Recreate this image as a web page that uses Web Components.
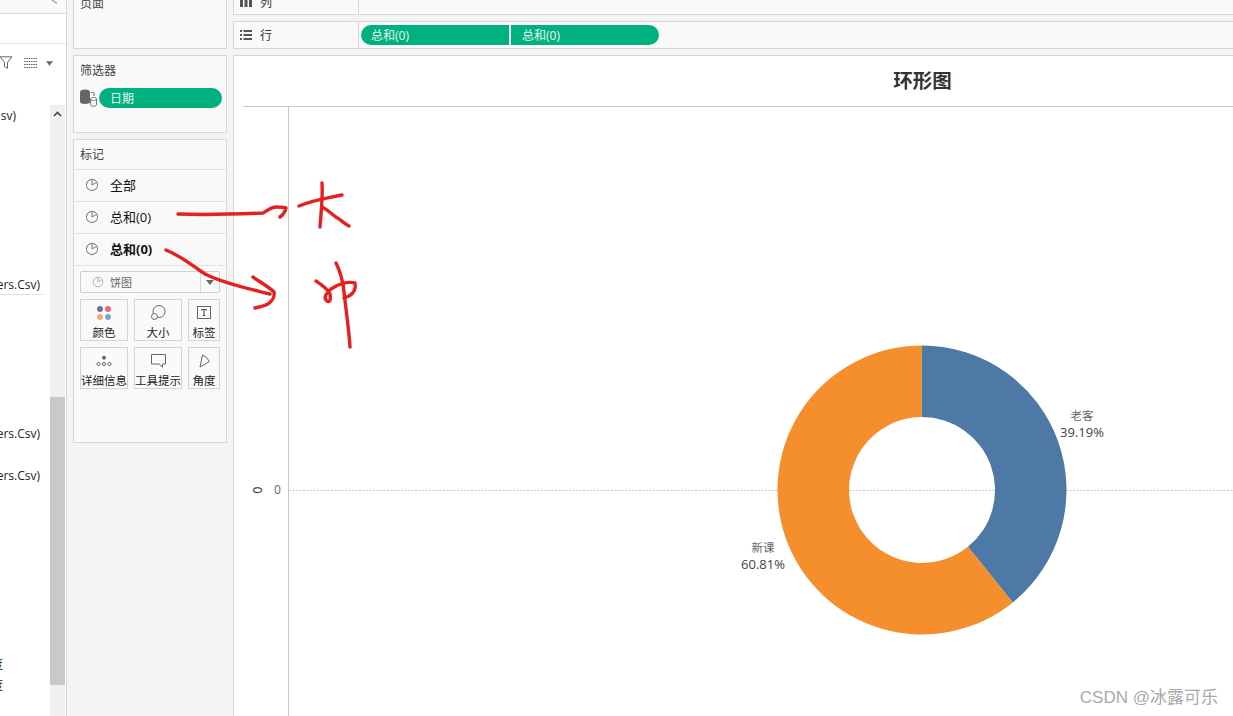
<!DOCTYPE html>
<html lang="zh">
<head>
<meta charset="utf-8">
<title>环形图</title>
<style>
  html, body { margin: 0; height: 100%; overflow: hidden; background: #f4f4f4; }
  body { font: 12px "Open Sans", "Noto Sans CJK SC", sans-serif; color: #222; }
</style>
</head>
<body>
<tab-app></tab-app>
<script>
const clockIcon = (size = 14, color = '#888') => `<svg width="${size}" height="${size}" viewBox="0 0 14 14" fill="none" stroke="${color}" stroke-width="1.1"><circle cx="7" cy="7" r="5.6"/><path d="M7 7V1.4M7 7l3.6-2.2"/></svg>`;

class DataPanel extends HTMLElement {
  constructor() {
    super();
    this.attachShadow({ mode: 'open' });
    // [text, empty space above in px, inset from the right, has underline]
    const rows = [
      ['sv)', 0, 34, false], ['ers.Csv)', 147, 10, true], ['ers.Csv)', 130, 10, false],
      ['ers.Csv)', 21, 10, false], ['度', 168, 47, false], ['度', 0, 47, false]
    ];
    this.shadowRoot.innerHTML = `
      <style>
        :host { display: flex; flex-direction: column; width: 66px; background: #fff; border-right: 1px solid #d6d6d6; height: 100%; overflow: hidden; }
        .top { height: 26px; box-sizing: border-box; border-bottom: 1px solid #dcdcdc; display: flex; justify-content: flex-end; align-items: flex-end; padding: 0 8px 9px 0; flex: none; background: #fafafa; }
        .tabs { height: 30px; box-sizing: border-box; border-bottom: 1px solid #e4e4e4; flex: none; }
        .tools { height: 61px; flex: none; display: flex; justify-content: flex-end; align-items: flex-start; padding: 12px 13px 0 0; box-sizing: border-box; }
        .sep { width: 1px; height: 16px; background: #d0d0d0; margin: 0 6px; }
        .list { flex: 1; display: flex; min-height: 0; }
        .rows { width: 50px; overflow: hidden; flex: none; }
        .row { height: 21px; line-height: 21px; white-space: nowrap; display: flex; justify-content: flex-end; box-sizing: border-box; font-size: 12px; }
        .row.line { box-shadow: 0 1px 0 #e2e2e2; margin-right: 7px; height: 20px; position: relative; top: 1px; }
        .bar { width: 15px; background: #f0f0f0; flex: none; display: flex; flex-direction: column; align-items: center; }
        .up { height: 292px; flex: none; padding-top: 6px; box-sizing: border-box; }
        .up svg { display: block; }
        .thumb { width: 15px; height: 288px; background: #c9c9c9; flex: none; }
      </style>
      <div class="top"><svg width="7" height="8" viewBox="0 0 7 8" fill="none" stroke="#777" style="display:block"><path d="M6 0.5L1 4 6 7.5"/></svg></div>
      <div class="tabs"></div>
      <div class="tools">
        <svg width="12" height="13" viewBox="0 0 12 13" fill="none" stroke="#666" style="flex:none"><path d="M0 .8h12L7.500 6.300v6L4.500 10.600V6.300z"/></svg>
        <span class="sep"></span>
        <svg width="13" height="10" viewBox="0 0 13 10" fill="none" stroke="#666" stroke-dasharray="1.600 .7" style="margin-top:2px;flex:none"><path d="M0 .5h13M0 3.500h13M0 6.500h13M0 9.500h13"/></svg>
        <svg width="7" height="5" viewBox="0 0 8 5" fill="#666" style="margin:5px 0 0 9px;flex:none"><path d="M0 0h8L4 5z"/></svg>
      </div>
      <div class="list">
        <div class="rows">
          ${rows.map(([t, gap, pad, line]) => `<div class="row ${line ? 'line' : ''}" style="margin-top:${gap}px;padding-right:${line ? pad - 7 : pad}px">${t}</div>`).join('')}
        </div>
        <div class="bar">
          <div class="up"><svg width="9" height="6" viewBox="0 0 9 6" fill="none" stroke="#444" stroke-width="1.600"><path d="M1 5l3.500-3.500L8 5"/></svg></div>
          <div class="thumb"></div>
        </div>
      </div>`;
  }
}
customElements.define('data-panel', DataPanel);

class ShelfCard extends HTMLElement {
  constructor() {
    super();
    this.attachShadow({ mode: 'open' });
    this.shadowRoot.innerHTML = `
      <style>
        :host { display: block; box-sizing: border-box; background: #f9f9f9; border: 1px solid #d6d6d6; }
        .title { height: 29px; line-height: 29px; padding-left: 6px; font-size: 12px; color: #444; }
      </style>
      <div class="title"></div>
      <slot></slot>`;
  }
  connectedCallback() {
    this.shadowRoot.querySelector('.title').textContent = this.getAttribute('title') || '';
  }
}
customElements.define('shelf-card', ShelfCard);

class GreenPill extends HTMLElement {
  constructor() {
    super();
    this.attachShadow({ mode: 'open' });
    this.shadowRoot.innerHTML = `
      <style>
        :host { display: flex; align-items: center; box-sizing: border-box; height: 20px; background: #00b180; color: #e6f7f1; font-size: 12px; padding-left: 11px; border-radius: 10px; flex: none; }
      </style>
      <slot></slot>`;
  }
}
customElements.define('green-pill', GreenPill);

class MarkRow extends HTMLElement {
  constructor() {
    super();
    this.attachShadow({ mode: 'open' });
    this.shadowRoot.innerHTML = `
      <style>
        :host { display: flex; align-items: center; box-sizing: border-box; height: 32px; border-top: 1px solid #e2e2e2; padding: 0 0 2px 11px; gap: 11px; font-size: 13px; color: #111; }
        :host([strong]) { font-weight: 700; }
        svg { flex: none; }
      </style>
      ${clockIcon()}
      <slot></slot>`;
  }
}
customElements.define('mark-row', MarkRow);

class MarkButton extends HTMLElement {
  constructor() {
    super();
    this.attachShadow({ mode: 'open' });
    this.shadowRoot.innerHTML = `
      <style>
        :host { display: flex; flex-direction: column; align-items: center; box-sizing: border-box; height: 42px; background: #fafafa; border: 1px solid #d4d4d4; font-size: 11.5px; color: #222; white-space: nowrap; }
        .ico { height: 26px; box-sizing: border-box; padding-bottom: 1px; display: flex; align-items: center; justify-content: center; flex: none; }
        .lbl { line-height: 14px; }
      </style>
      <div class="ico"><slot name="icon"></slot></div>
      <div class="lbl"><slot></slot></div>`;
  }
}
customElements.define('mark-button', MarkButton);

class MarksCard extends HTMLElement {
  constructor() {
    super();
    this.attachShadow({ mode: 'open' });
    this.shadowRoot.innerHTML = `
      <style>
        :host { display: block; }
        .wrap { border-top: 1px solid #e2e2e2; padding: 5px 6px 0 6px; }
        .select { display: flex; align-items: center; height: 22px; box-sizing: border-box; border: 1px solid #cfcfcf; border-radius: 2px; background: #f9f9f9; font-size: 11px; color: #666; }
        .select .lab { flex: 1; display: flex; align-items: center; gap: 6px; padding-left: 11px; }
        .select .drop { width: 18px; height: 100%; border-left: 1px solid #d8d8d8; display: flex; align-items: center; justify-content: center; }
        .grid { display: grid; grid-template-columns: 48px 48px 32px; gap: 6px; margin-top: 6px; }
      </style>
      <mark-row>全部</mark-row>
      <mark-row>总和(0)</mark-row>
      <mark-row strong>总和(0)</mark-row>
      <div class="wrap">
        <div class="select">
          <div class="lab">${clockIcon(12, '#aaa')}<span>饼图</span></div>
          <div class="drop"><svg width="8" height="5" viewBox="0 0 8 5" fill="#666"><path d="M0 0h8L4 5z"/></svg></div>
        </div>
        <div class="grid">
          <mark-button>颜色<svg slot="icon" width="16" height="16" viewBox="0 0 16 16"><circle cx="4" cy="4" r="3" fill="#7d6b9e"/><circle cx="12" cy="4" r="3" fill="#e8697f"/><circle cx="4" cy="12" r="3" fill="#f4ab80"/><circle cx="12" cy="12" r="3" fill="#7ea3cf"/></svg></mark-button>
          <mark-button>大小<svg slot="icon" width="16" height="16" viewBox="0 0 16 16" fill="#fafafa" stroke="#666"><circle cx="9" cy="6.500" r="6"/><circle cx="4.500" cy="11.500" r="3"/></svg></mark-button>
          <mark-button>标签<svg slot="icon" width="14" height="13" viewBox="0 0 14 13" fill="none" stroke="#666"><rect x=".5" y=".5" width="13" height="12"/><path d="M4.500 4.500v-1h5v1M7 3.500v6M5.800 9.500h2.400" stroke="#444"/></svg></mark-button>
          <mark-button>详细信息<svg slot="icon" width="16" height="12" viewBox="0 0 16 12" fill="none" stroke="#666"><circle cx="8" cy="2.800" r="2" fill="#666" stroke="none"/><circle cx="2.500" cy="9" r="1.600"/><circle cx="8" cy="9" r="1.600"/><circle cx="13.500" cy="9" r="1.600"/></svg></mark-button>
          <mark-button>工具提示<svg slot="icon" width="15" height="14" viewBox="0 0 15 14" fill="none" stroke="#666"><path d="M.5.500h14v9.500h-3v3.300l-3.200-3.300H.5z"/></svg></mark-button>
          <mark-button>角度<svg slot="icon" width="11" height="14" viewBox="0 0 11 14" fill="none" stroke="#666"><path d="M1 13L3.500 1Q8 3 10.500 7.500z"/></svg></mark-button>
        </div>
      </div>`;
  }
}
customElements.define('marks-card', MarksCard);

class ViewShelf extends HTMLElement {
  constructor() {
    super();
    this.attachShadow({ mode: 'open' });
    this.shadowRoot.innerHTML = `
      <style>
        :host { display: flex; box-sizing: border-box; background: #f9f9f9; border: 1px solid #d6d6d6; border-right: 0; height: 28px; font-size: 12px; color: #333; }
        .name { width: 125px; border-right: 1px solid #d6d6d6; display: flex; align-items: center; gap: 8px; padding-left: 6px; box-sizing: border-box; flex: none; }
        .pills { display: flex; align-items: center; gap: 2px; padding-left: 2px; }
      </style>
      <div class="name"><slot name="icon"></slot><span class="t"></span></div>
      <div class="pills"><slot></slot></div>`;
  }
  connectedCallback() {
    this.shadowRoot.querySelector('.t').textContent = this.getAttribute('title') || '';
  }
}
customElements.define('view-shelf', ViewShelf);

class DonutChart extends HTMLElement {
  constructor() {
    super();
    this.attachShadow({ mode: 'open' });
    // plot origin is the axis line; centre of the ring sits at (633,383)
    const cx = 633, cy = 383, R = 144.5, r = 73;
    const a = 0.3919 * 2 * Math.PI;
    const px = (rad, ang) => (cx + rad * Math.sin(ang)).toFixed(1);
    const py = (rad, ang) => (cy - rad * Math.cos(ang)).toFixed(1);
    const blue = `M${px(R, 0)} ${py(R, 0)}A${R} ${R} 0 0 1 ${px(R, a)} ${py(R, a)}L${px(r, a)} ${py(r, a)}A${r} ${r} 0 0 0 ${px(r, 0)} ${py(r, 0)}Z`;
    const orange = `M${px(R, a)} ${py(R, a)}A${R} ${R} 0 1 1 ${px(R, 0)} ${py(R, 0)}L${px(r, 0)} ${py(r, 0)}A${r} ${r} 0 1 0 ${px(r, a)} ${py(r, a)}Z`;
    this.shadowRoot.innerHTML = `
      <style>
        :host { display: flex; flex-direction: column; box-sizing: border-box; background: #fff; border: 1px solid #d6d6d6; border-right: 0; border-bottom: 0; height: 100%; overflow: hidden; }
        /* the sheet is wider than the capture, so the title centres further right */
        .title { height: 51px; box-sizing: border-box; text-align: center; font: 700 19.5px/48px "Noto Sans CJK SC", sans-serif; color: #333; margin-left: 9px; border-bottom: 1px solid #c8c8c8; flex: none; padding-left: 369px; }
        .plot { flex: 1; display: flex; min-height: 0; }
        .axis { width: 54px; flex: none; border-right: 1px solid #c8c8c8; position: relative; }
        .axis span { position: absolute; top: 376px; font-size: 12px; line-height: 14px; }
        .axis .rot { left: 21px; transform: rotate(-90deg); color: #222; }
        .axis .val { left: 40px; color: #666; }
        .canvas { flex: 1; min-width: 0; }
        svg { display: block; width: 100%; height: 100%; }
        text { font-family: "Open Sans", "Noto Sans CJK SC", sans-serif; font-size: 13px; fill: #444; text-anchor: middle; }
        text.cat { font-size: 11.5px; fill: #666; }
      </style>
      <div class="title">环形图</div>
      <div class="plot">
        <div class="axis"><span class="rot">0</span><span class="val">0</span></div>
        <div class="canvas">
          <svg>
            <line x1="0" x2="1000" y1="383.500" y2="383.500" stroke="#c4c4c4" stroke-dasharray="2 1.500"/>
            <path d="${blue}" fill="#4e78a6"/>
            <path d="${orange}" fill="#f58e2c"/>
            <text class="cat" x="793" y="313">老客</text>
            <text x="793" y="330">39.19%</text>
            <text class="cat" x="474" y="445">新课</text>
            <text x="474" y="462">60.81%</text>
          </svg>
        </div>
      </div>`;
  }
}
customElements.define('donut-chart', DonutChart);

// red pen marks drawn on top of the screenshot, plus the watermark
class InkOverlay extends HTMLElement {
  constructor() {
    super();
    this.attachShadow({ mode: 'open' });
    this.shadowRoot.innerHTML = `
      <style>
        :host { position: absolute; inset: 0; pointer-events: none; display: block; }
        svg { position: absolute; left: 0; top: 0; }
        .mark { position: absolute; right: 15px; bottom: 7px; font: 17px "Liberation Sans", "Noto Sans CJK SC", sans-serif; color: #a9a9a9; line-height: 22px; }
      </style>
      <svg width="1233" height="716" fill="none" stroke="#e62020" stroke-width="3.400" stroke-linecap="round" stroke-linejoin="round">
        <path d="M178 214C205 215 240 214 263 213C268 211 270 207 276 207C280 207 285 207 286 208C285 212 283 215 280 217"/>
        <path d="M322 183C323 198 321 213 320 227"/>
        <path d="M299 206C313 200 328 198 342 195"/>
        <path d="M322 207C328 210 330 213 336 217C341 220 345 224 349 226"/>
        <path d="M336 263C341 273 343 281 344 292C346 310 349 330 350 347"/>
        <path d="M316 281C322 285 327 288 330 294C331 299 330 303 327 301C323 298 326 293 331 289C338 284 348 281 355 283C356 288 354 293 349 296L344 298"/>
        <path d="M166 250C185 258 195 268 205 274C225 284 250 289 270 294"/>
        <path d="M253 277C260 282 269 287 274 292C275 298 272 301 268 304C264 306 259 307 255 308"/>
      </svg>
      <div class="mark">CSDN @冰露可乐</div>`;
  }
}
customElements.define('ink-overlay', InkOverlay);

class TabApp extends HTMLElement {
  constructor() {
    super();
    this.attachShadow({ mode: 'open' });
    this.shadowRoot.innerHTML = `
      <style>
        /* the capture starts a bit below the real top of the window */
        :host { display: block; position: relative; height: 716px; width: 1233px; overflow: hidden; }
        .root { display: grid; grid-template-columns: 67px 154px 1fr; column-gap: 6px; height: 740px; margin-top: -12px; }
        .col { display: flex; flex-direction: column; gap: 6px; min-height: 0; min-width: 0; }
        .page { height: 61px; flex: none; }
        .filters { height: 78px; flex: none; }
        .filter-row { display: flex; align-items: center; gap: 2px; padding: 0 4px 0 6px; margin-top: 3px; }
        .marks { height: 304px; flex: none; }
        .cols { height: 27px; flex: none; }
        .chart { flex: 1; min-height: 0; }
      </style>
      <div class="root">
        <data-panel></data-panel>
        <div class="col">
          <shelf-card class="page" title="页面"></shelf-card>
          <shelf-card class="filters" title="筛选器">
            <div class="filter-row">
              <svg width="17" height="18" viewBox="0 0 17 18" style="flex:none"><path d="M0 3c0-1.400 2-2.500 5-2.500s5 1.100 5 2.500v10c0 1.200-2 2-5 2s-5-.8-5-2z" fill="#666"/><path d="M10.500 10c0-.9 1.300-1.500 3-1.500s3 .6 3 1.500v5.800c0 .8-1.300 1.400-3 1.400s-3-.6-3-1.400zM10.500 10.200c0 .8 1.300 1.300 3 1.300s3-.5 3-1.300" fill="#f9f9f9" stroke="#666" stroke-width=".9"/><path d="M11 3.500h3v3M13 5.500l1 1 1-1" fill="none" stroke="#666" stroke-width=".8"/></svg>
              <green-pill style="flex:1">日期</green-pill>
            </div>
          </shelf-card>
          <shelf-card class="marks" title="标记"><marks-card></marks-card></shelf-card>
        </div>
        <div class="col">
          <view-shelf class="cols" title="列">
            <svg slot="icon" width="12" height="10" viewBox="0 0 12 10" fill="#555"><path d="M0 0h3v10H0zM4.500 0h3v10h-3zM9 0h3v10H9z"/></svg>
          </view-shelf>
          <view-shelf title="行">
            <svg slot="icon" width="12" height="10" viewBox="0 0 12 10" fill="#555"><path d="M0 0h2v2H0zM3.500 0H12v2H3.500zM0 4h2v2H0zM3.500 4H12v2H3.500zM0 8h2v2H0zM3.500 8H12v2H3.500z"/></svg>
            <green-pill style="width:148px;padding-left:10px;border-radius:10px 0 0 10px">总和(0)</green-pill>
            <green-pill style="width:148px;border-radius:0 10px 10px 0">总和(0)</green-pill>
          </view-shelf>
          <div class="chart"><donut-chart></donut-chart></div>
        </div>
      </div>
      <ink-overlay></ink-overlay>`;
  }
}
customElements.define('tab-app', TabApp);
</script>
</body>
</html>
